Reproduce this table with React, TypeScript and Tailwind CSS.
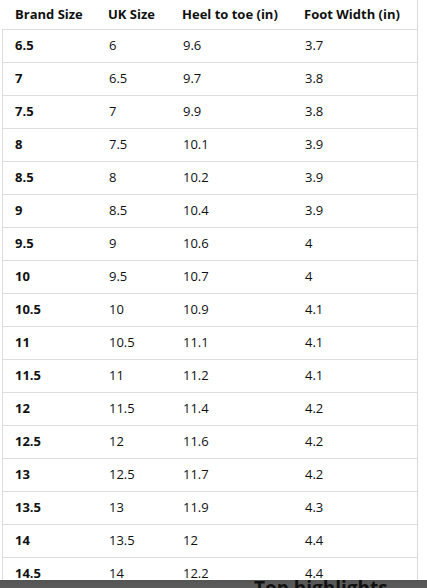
const rows: [string, string, string, string][] = [
  ["6.5", "6", "9.6", "3.7"],
  ["7", "6.5", "9.7", "3.8"],
  ["7.5", "7", "9.9", "3.8"],
  ["8", "7.5", "10.1", "3.9"],
  ["8.5", "8", "10.2", "3.9"],
  ["9", "8.5", "10.4", "3.9"],
  ["9.5", "9", "10.6", "4"],
  ["10", "9.5", "10.7", "4"],
  ["10.5", "10", "10.9", "4.1"],
  ["11", "10.5", "11.1", "4.1"],
  ["11.5", "11", "11.2", "4.1"],
  ["12", "11.5", "11.4", "4.2"],
  ["12.5", "12", "11.6", "4.2"],
  ["13", "12.5", "11.7", "4.2"],
  ["13.5", "13", "11.9", "4.3"],
  ["14", "13.5", "12", "4.4"],
  ["14.5", "14", "12.2", "4.4"],
];

const cols = "grid grid-cols-[94px_74px_122px_1fr] items-center";

export default function App() {
  return (
    <div className="relative h-[588px] w-[427px] overflow-hidden bg-white font-['Open_Sans',sans-serif] text-[13px] text-[#0f1111]">
      <div className="ml-[2px] w-[416px] border-r border-[#d5d9d9]">
        <div className={`${cols} h-[30px] border-b border-[#dddddd] font-bold`}>
          <div className="pl-[13px]">Brand Size</div>
          <div className="pl-[12px]">UK Size</div>
          <div className="pl-[12px]">Heel to toe (in)</div>
          <div className="pl-[12px]">Foot Width (in)</div>
        </div>
        <div className="border-l border-[#dddddd]">
          {rows.map(r => (
            <div key={r[0]} className={`${cols} h-[33px] border-b border-[#dddddd]`}>
              <div className="pl-[12px] font-bold">{r[0]}</div>
              <div className="pl-[12px]">{r[1]}</div>
              <div className="pl-[12px]">{r[2]}</div>
              <div className="pl-[12px]">{r[3]}</div>
            </div>
          ))}
        </div>
      </div>
      <div className="absolute left-0 right-0 top-[580px] h-[30px] bg-gradient-to-b from-[#555555] to-[#6e6e6e]">
        <div className="-mt-[4px] pl-[254px] text-[19px] font-bold leading-[24px] text-[#111111]">Top highlights</div>
      </div>
    </div>
  );
}
